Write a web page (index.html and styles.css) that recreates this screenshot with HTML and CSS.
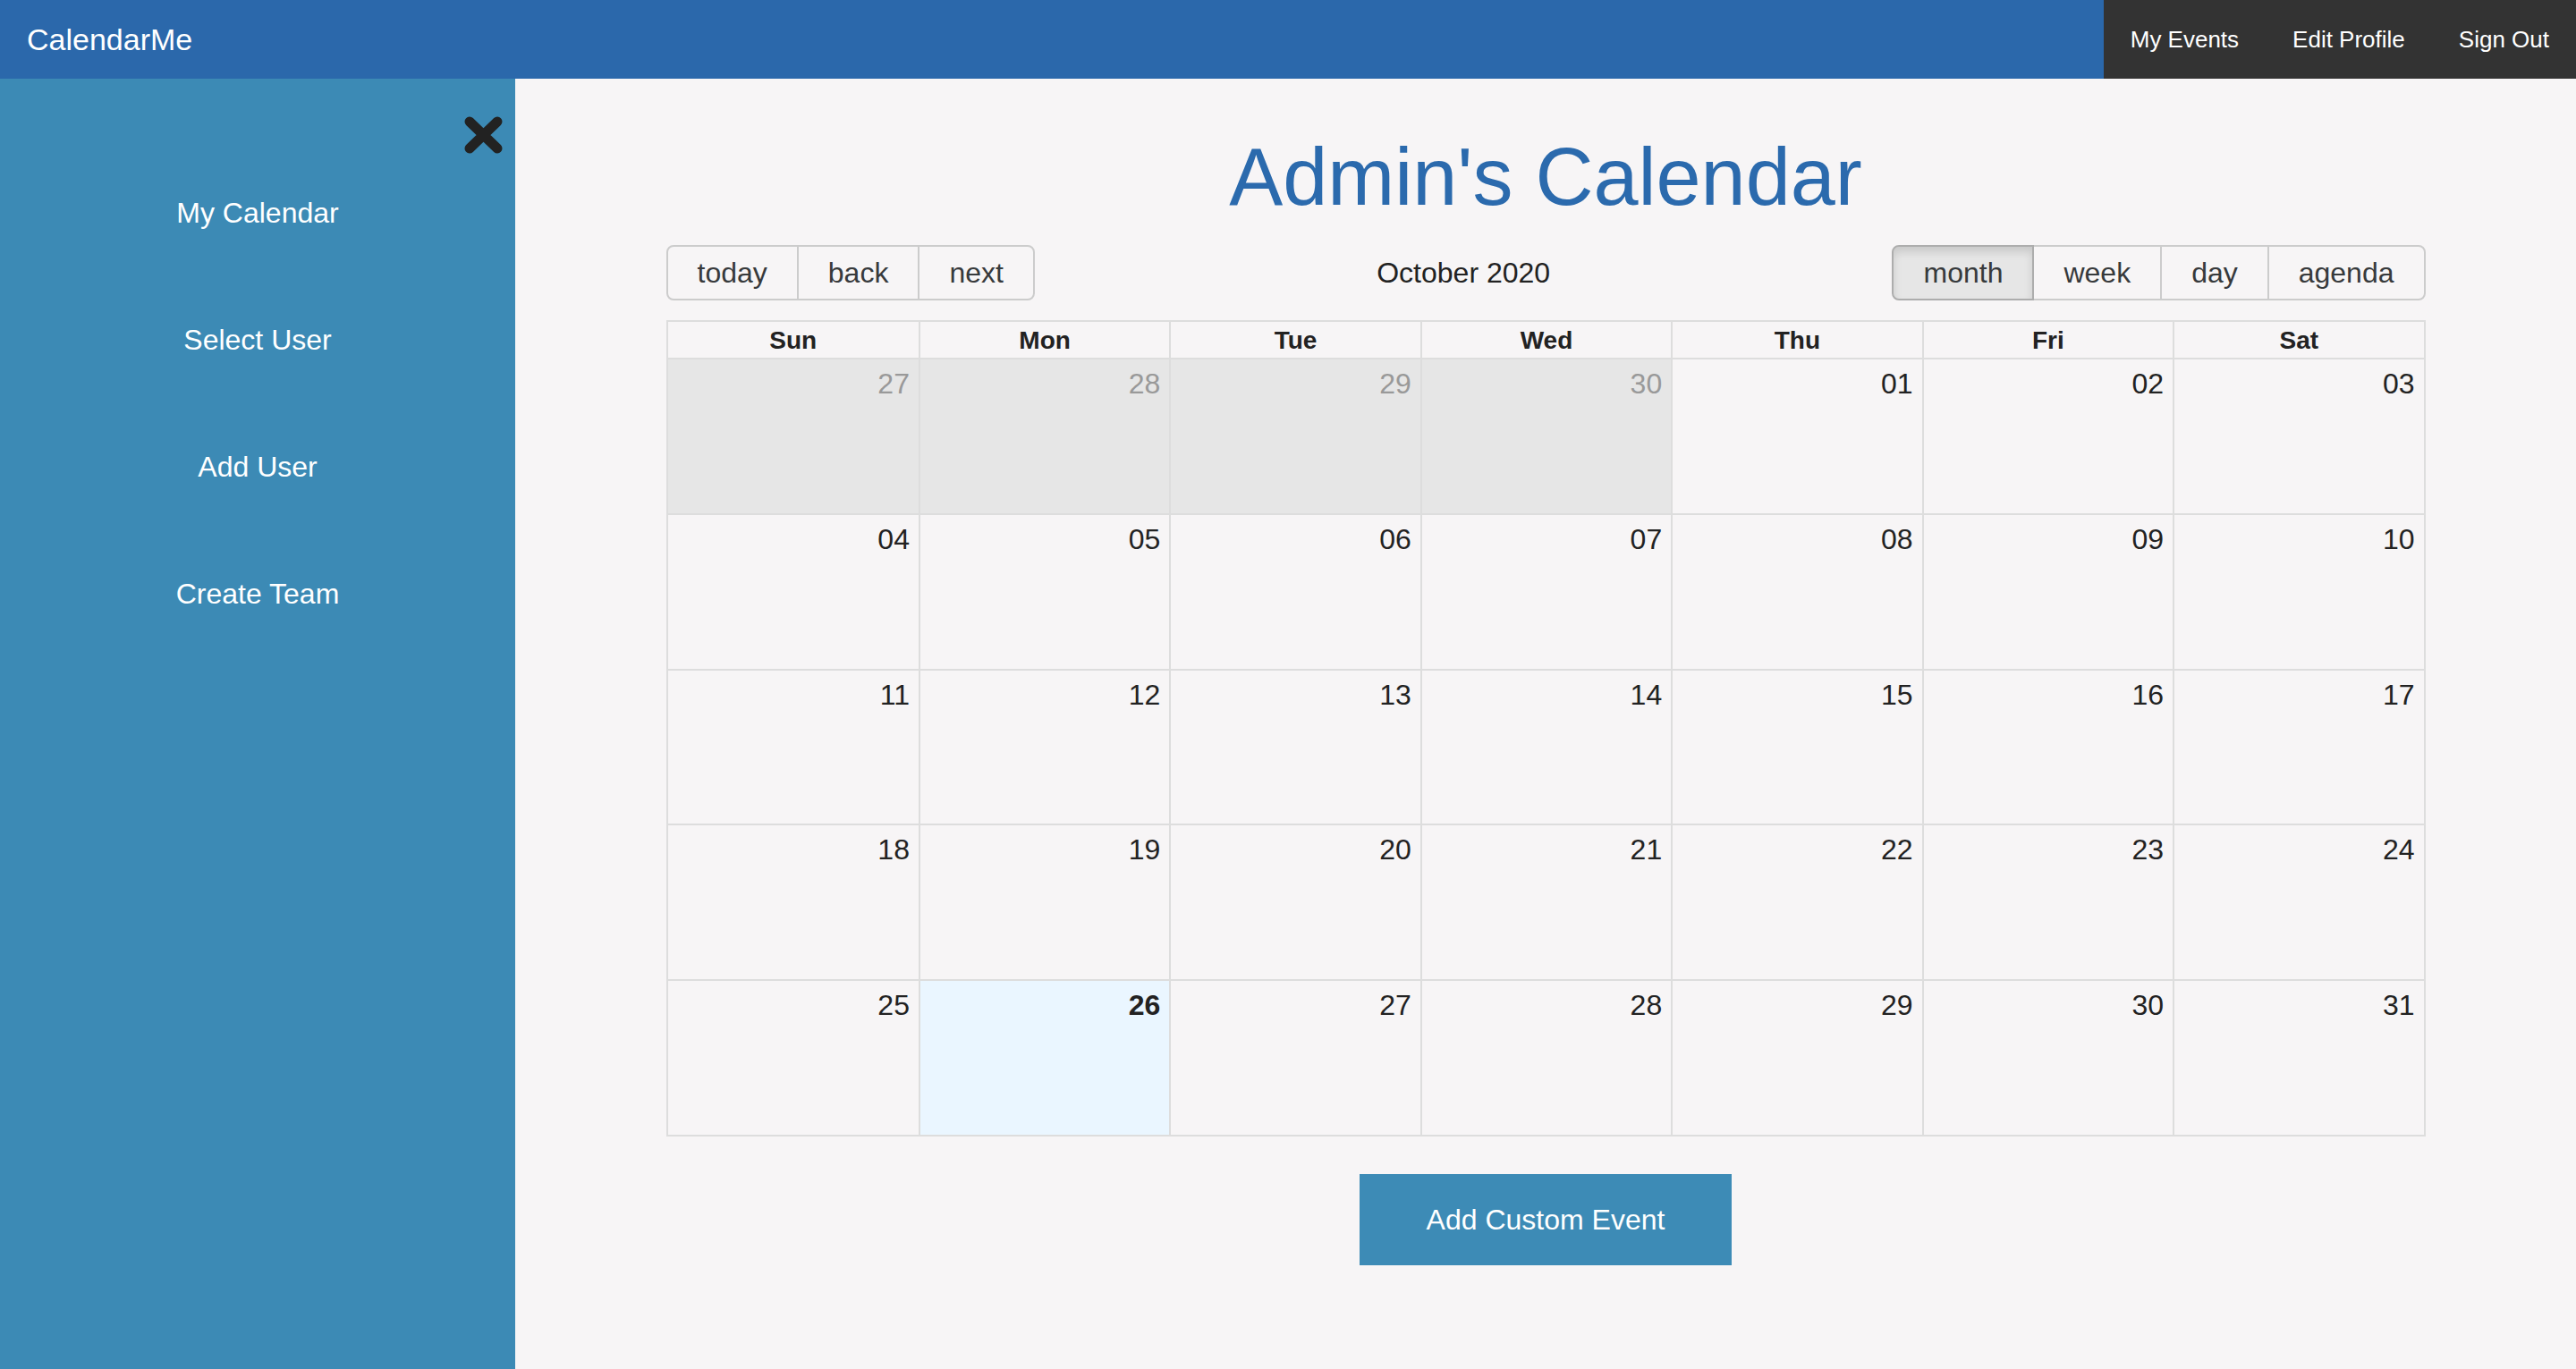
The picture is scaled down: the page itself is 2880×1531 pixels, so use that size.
FILE: index.html
```html
<!DOCTYPE html>
<html>
<head>
<meta charset="utf-8">
<title>CalendarMe</title>
<link rel="stylesheet" href="styles.css">
</head>
<body>
<div class="app">
  <header class="topbar">
    <div class="brand">CalendarMe</div>
    <nav class="topnav">
      <a class="topnav-link">My Events</a>
      <a class="topnav-link">Edit Profile</a>
      <a class="topnav-link">Sign Out</a>
    </nav>
  </header>
  <div class="layout">
    <aside class="sidebar">
      <div class="close-row">
        <svg class="close-icon" viewBox="0 0 45 44" width="45" height="44"><path d="M7 7 L38 37 M38 7 L7 37" stroke="#222" stroke-width="11" stroke-linecap="round" fill="none"/></svg>
      </div>
      <ul class="side-list">
        <li class="side-item">My Calendar</li>
        <li class="side-item">Select User</li>
        <li class="side-item">Add User</li>
        <li class="side-item">Create Team</li>
      </ul>
    </aside>
    <main class="main">
      <h1 class="title">Admin's Calendar</h1>
      <div class="calendar">
        <div class="toolbar">
          <div class="btn-group">
            <button class="btn">today</button>
            <button class="btn">back</button>
            <button class="btn">next</button>
          </div>
          <div class="toolbar-label">October 2020</div>
          <div class="btn-group">
            <button class="btn active">month</button>
            <button class="btn">week</button>
            <button class="btn">day</button>
            <button class="btn">agenda</button>
          </div>
        </div>
        <div class="month">
          <div class="month-header">
            <div class="hcell">Sun</div><div class="hcell">Mon</div><div class="hcell">Tue</div><div class="hcell">Wed</div><div class="hcell">Thu</div><div class="hcell">Fri</div><div class="hcell">Sat</div>
          </div>
          <div class="week">
            <div class="cell off">27</div><div class="cell off">28</div><div class="cell off">29</div><div class="cell off">30</div><div class="cell">01</div><div class="cell">02</div><div class="cell">03</div>
          </div>
          <div class="week">
            <div class="cell">04</div><div class="cell">05</div><div class="cell">06</div><div class="cell">07</div><div class="cell">08</div><div class="cell">09</div><div class="cell">10</div>
          </div>
          <div class="week">
            <div class="cell">11</div><div class="cell">12</div><div class="cell">13</div><div class="cell">14</div><div class="cell">15</div><div class="cell">16</div><div class="cell">17</div>
          </div>
          <div class="week">
            <div class="cell">18</div><div class="cell">19</div><div class="cell">20</div><div class="cell">21</div><div class="cell">22</div><div class="cell">23</div><div class="cell">24</div>
          </div>
          <div class="week">
            <div class="cell">25</div><div class="cell today">26</div><div class="cell">27</div><div class="cell">28</div><div class="cell">29</div><div class="cell">30</div><div class="cell">31</div>
          </div>
        </div>
      </div>
      <div class="actions">
        <button class="add-btn">Add Custom Event</button>
      </div>
    </main>
  </div>
</div>
</body>
</html>
```
FILE: styles.css
```css
* { box-sizing: border-box; }
html, body { margin: 0; padding: 0; }
body {
  font-family: "Liberation Sans", Arial, Helvetica, sans-serif;
  background: #f7f5f6;
  color: #222;
}
.app { display: flex; flex-direction: column; min-height: 100vh; }
.topbar {
  height: 88px;
  background: #2b68ab;
  display: flex;
  align-items: stretch;
  justify-content: space-between;
}
.brand {
  color: #fff;
  font-size: 34px;
  display: flex;
  align-items: center;
  padding-left: 30px;
}
.topnav {
  background: #333;
  display: flex;
  align-items: center;
}
.topnav-link {
  color: #fff;
  font-size: 26px;
  padding: 0 30px;
  line-height: 88px;
}
.layout { display: flex; flex: 1; }
.sidebar {
  width: 576px;
  flex: none;
  background: #3c8ab5;
  min-height: calc(100vh - 88px);
}
.close-row {
  display: flex;
  justify-content: flex-end;
  padding: 41px 13px 0 0;
}
.close-icon { display: block; }
.side-list {
  list-style: none;
  margin: 47px 0 0 0;
  padding: 0;
  display: flex;
  flex-direction: column;
  gap: 105px;
}
.side-item {
  color: #fff;
  font-size: 32px;
  line-height: 37px;
  text-align: center;
}
.main { flex: 1; display: flex; flex-direction: column; align-items: center; }
.title {
  margin: 61px 0 0 0;
  font-size: 90px;
  line-height: 99px;
  font-weight: normal;
  color: #2b6aad;
}
.calendar { width: 1967px; margin-top: 26px; }
.toolbar { display: flex; align-items: center; height: 62px; }
.btn-group { display: flex; }
.btn {
  font-family: inherit;
  font-size: 32px;
  color: #373a3c;
  background: transparent;
  border: 2px solid #ccc;
  height: 62px;
  padding: 0 33px;
  margin: 0 0 0 -2px;
  border-radius: 0;
  line-height: 1;
}
.btn:first-child { margin-left: 0; border-radius: 8px 0 0 8px; }
.btn:last-child { border-radius: 0 8px 8px 0; }
.btn.active {
  background: #e6e6e6;
  border-color: #adadad;
  box-shadow: inset 0 6px 10px rgba(0,0,0,0.125);
  position: relative;
}
.toolbar-label { flex: 1; text-align: center; font-size: 32px; color: #222; }
.month {
  margin-top: 22px;
  height: 913px;
  border: 2px solid #ddd;
  display: flex;
  flex-direction: column;
}
.month-header {
  display: grid;
  grid-template-columns: repeat(7, 1fr);
  height: 42px;
  border-bottom: 2px solid #ddd;
  flex: none;
}
.hcell {
  font-weight: bold;
  font-size: 28px;
  text-align: center;
  line-height: 42px;
  border-left: 2px solid #ddd;
}
.hcell:first-child, .cell:first-child { border-left: none; }
.week {
  flex: 1;
  display: grid;
  grid-template-columns: repeat(7, 1fr);
  border-bottom: 2px solid #ddd;
}
.week:last-child { border-bottom: none; }
.cell {
  border-left: 2px solid #ddd;
  text-align: right;
  font-size: 32px;
  padding: 9px 10px 0 0;
  color: #222;
}
.cell.off { background: #e6e6e6; color: #999; }
.cell.today { background: #eaf6ff; font-weight: bold; }
.actions { margin-top: 42px; }
.add-btn {
  font-family: inherit;
  width: 416px;
  height: 102px;
  background: #3d8bb6;
  color: #fff;
  border: none;
  font-size: 32px;
  padding: 0;
}
```
